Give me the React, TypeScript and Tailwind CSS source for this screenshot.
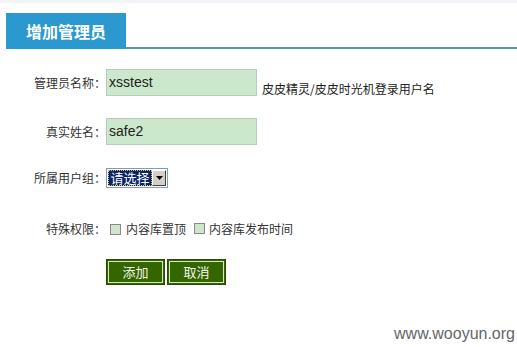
import React from "react";

const cjk = { fontFamily: '"Noto Sans CJK SC", "Liberation Sans", sans-serif' };

function Label({ children }: { children: React.ReactNode }) {
  return (
    <div className="w-[106px] shrink-0 text-right text-[12px] leading-[16px] text-[#333]" style={cjk}>
      {children}
    </div>
  );
}

function Checkbox() {
  return <span className="inline-block w-[11px] h-[11px] border border-[#8a8a8a] bg-[#cfe6cc]" />;
}

function Btn({ children }: { children: React.ReactNode }) {
  return (
    <div className="w-[59px] h-[26px] border border-[#2a4a05] bg-[#336600] p-px">
      <div
        className="w-full h-full border border-[#d8e8c0] flex items-center justify-center text-[13px] text-[#f4f4e8]"
        style={cjk}
      >
        {children}
      </div>
    </div>
  );
}

export default function App() {
  return (
    <div className="w-[517px] h-[347px] bg-white relative overflow-hidden">
      <div className="h-[3px] bg-[#f1f5f8]" />
      <div className="pt-[10px] flex items-end ml-[6px]">
        <div
          className="w-[120px] h-[36px] bg-[#2b98d0] text-white font-bold text-[16px] flex items-center justify-center"
          style={cjk}
        >
          增加管理员
        </div>
        <div className="flex-1 border-b-2 border-[#5b98a2]" />
      </div>

      <div className="pt-[20px]">
        {/* row 1 */}
        <div className="flex items-center h-[27px]">
          <Label>管理员名称：</Label>
          <div className="w-[151px] h-[27px] border border-[#b8cdb8] bg-[#cce8cc] flex items-center pl-[2px] text-[14px] text-[#222]" style={{ fontFamily: '"Liberation Sans", Arial, sans-serif' }}>
            xsstest
          </div>
          <div className="self-end ml-[5px] mb-[-1px] text-[12px] leading-[16px] text-[#222]" style={cjk}>
            皮皮精灵/皮皮时光机登录用户名
          </div>
        </div>

        {/* row 2 */}
        <div className="flex items-center h-[27px] mt-[22px]">
          <Label>真实姓名：</Label>
          <div className="w-[151px] h-[27px] border border-[#b8cdb8] bg-[#cce8cc] flex items-center pl-[2px] text-[14px] text-[#222]" style={{ fontFamily: '"Liberation Sans", Arial, sans-serif' }}>
            safe2
          </div>
        </div>

        {/* row 3 */}
        <div className="flex items-center h-[20px] mt-[23px]">
          <Label>所属用户组：</Label>
          <div className="h-[20px] w-[62px] border border-[#7f9db9] bg-white flex items-stretch p-px">
            <div className="flex-1 bg-[#0a246a] text-white text-[13px] leading-[16px] flex items-center justify-center border border-dotted border-[#f0c050]" style={cjk}>
              请选择
            </div>
            <div className="w-[14px] bg-[#d4d0c8] border-t border-l border-white border-r border-b border-r-[#404040] border-b-[#404040] flex items-center justify-center">
              <svg width="7" height="4" viewBox="0 0 7 4"><path d="M0 0h7L3.5 4z" fill="#000" /></svg>
            </div>
          </div>
        </div>

        {/* row 4 */}
        <div className="flex items-center h-[16px] mt-[33px]">
          <Label>特殊权限：</Label>
          <div className="flex items-center ml-[4px] text-[12px] text-[#333]" style={cjk}>
            <Checkbox />
            <span className="ml-[5px]">内容库置顶</span>
            <span className="ml-[8px]"><Checkbox /></span>
            <span className="ml-[4px]">内容库发布时间</span>
          </div>
        </div>

        {/* buttons */}
        <div className="flex pl-[106px] mt-[22px] gap-[2px]">
          <Btn>添加</Btn>
          <Btn>取消</Btn>
        </div>
      </div>

      <div
        className="absolute right-[2px] bottom-[1px] text-[16px] text-[#666]"
        style={{ fontFamily: '"Liberation Sans", Arial, sans-serif' }}
      >
        www.wooyun.org
      </div>
    </div>
  );
}
